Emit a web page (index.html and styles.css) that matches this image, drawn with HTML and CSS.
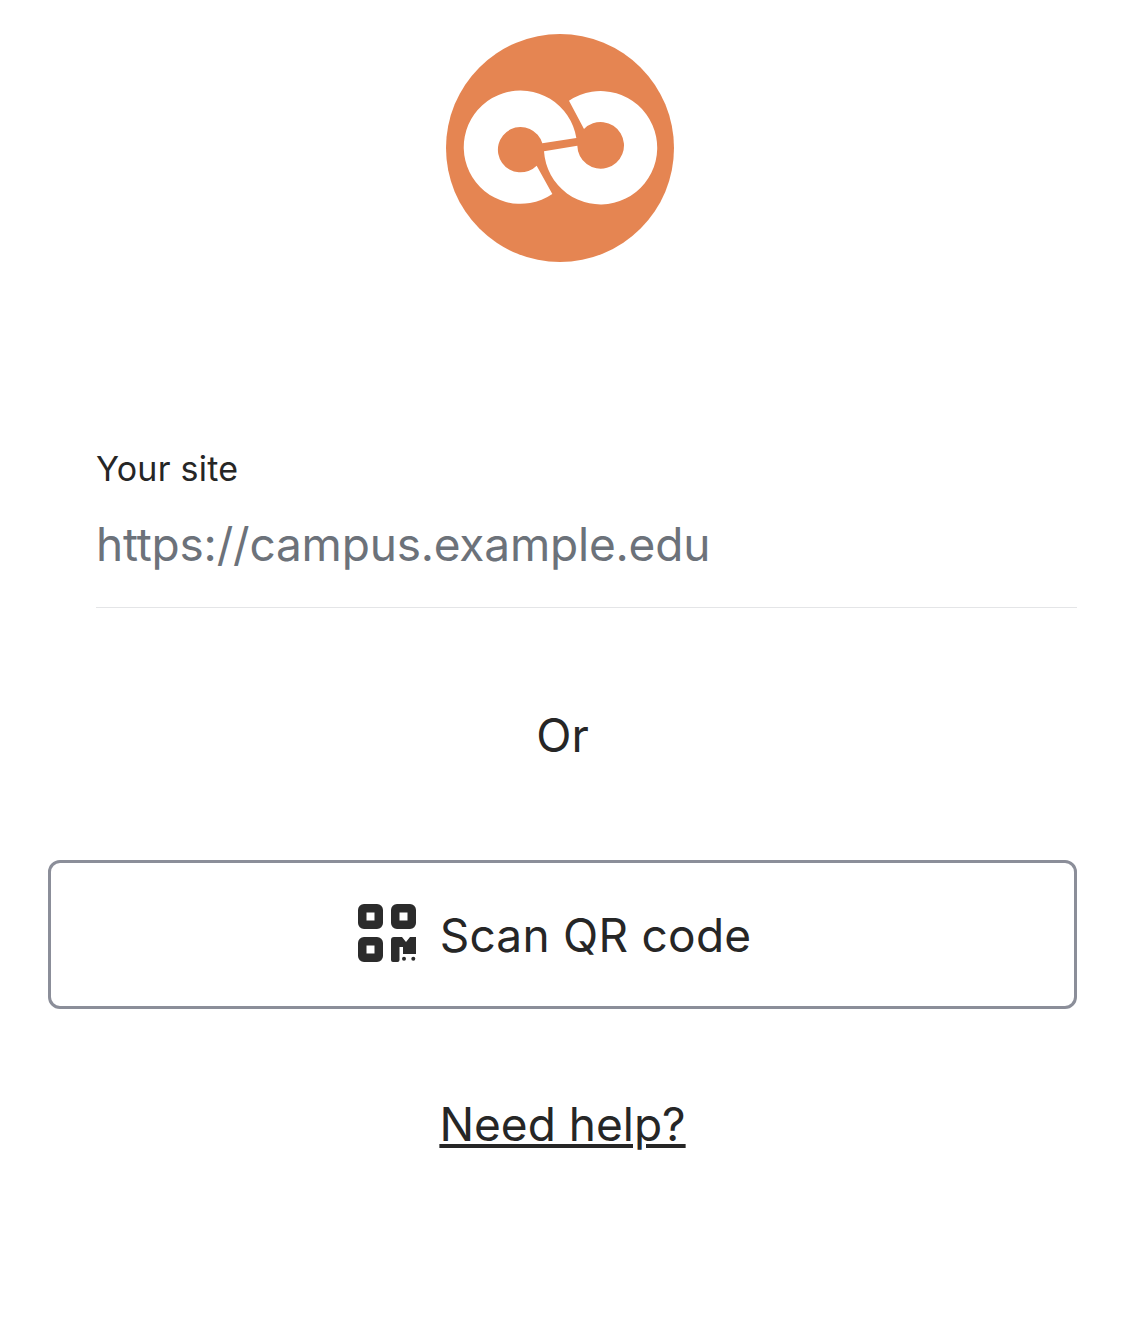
FILE: index.html
```html
<!DOCTYPE html>
<html lang="en">

<head>
    <meta charset="UTF-8">
    <meta name="viewport" content="width=device-width, initial-scale=1.0">
    <title>Connect to site</title>
    <link rel="stylesheet" href="styles.css">
</head>

<body>
    <main class="page">
        <div class="logo-wrap">
            <svg class="logo" viewBox="0 0 684 684" width="228" height="228">
                <circle cx="342" cy="342" r="342" fill="#e58552"></circle>
                <g transform="translate(-46 -40)" fill="#fff">
                    <path d="M365 520A170 170 0 1 1 437 352L335 368A68 68 0 1 0 318 435Z"></path>
                    <path d="M415 240A170 170 0 1 1 340 392L440 375A70 70 0 1 0 460 325Z"></path>
                </g>
            </svg>
        </div>

        <div class="site-field">
            <label class="site-label" for="site">Your site</label>
            <input class="site-input" id="site" type="text" placeholder="https://campus.example.edu">
        </div>

        <p class="or-text">Or</p>

        <button class="qr-button" type="button">
            <svg class="qr-icon" viewBox="0 0 58 58" width="58" height="58">
                <path fill-rule="evenodd" fill="#2b2b2b" d="M6 0H19A6 6 0 0 1 25 6V19A6 6 0 0 1 19 25H6A6 6 0 0 1 0 19V6A6 6 0 0 1 6 0ZM8.500 8.500V16.500H16.500V8.500Z"></path>
                <path fill-rule="evenodd" fill="#2b2b2b" d="M39 0H52A6 6 0 0 1 58 6V19A6 6 0 0 1 52 25H39A6 6 0 0 1 33 19V6A6 6 0 0 1 39 0ZM41.500 8.500V16.500H49.500V8.500Z"></path>
                <path fill-rule="evenodd" fill="#2b2b2b" d="M6 33H19A6 6 0 0 1 25 39V52A6 6 0 0 1 19 58H6A6 6 0 0 1 0 52V39A6 6 0 0 1 6 33ZM8.500 41.500V49.500H16.500V41.500Z"></path>
                <path fill="#2b2b2b" d="M36 33H44L48 38L52 33H58V50H45V43H41.500V56A2 2 0 0 1 39.500 58H35A2 2 0 0 1 33 56V36A3 3 0 0 1 36 33Z"></path>
                <circle cx="46" cy="54.800" r="2" fill="#2b2b2b"></circle>
                <circle cx="55.300" cy="54.800" r="2" fill="#2b2b2b"></circle>
            </svg>
            <span>Scan QR code</span>
        </button>

        <a class="help-link" href="#">Need help?</a>
    </main>
</body>

</html>
```

FILE: styles.css
```css
body {
    font-family: Inter, "Liberation Sans", sans-serif;
    margin: 0;
    background-color: #fff;
    color: #262626;
}

.page {
    display: flex;
    flex-direction: column;
    padding: 34px 48px 0;
}

.logo-wrap {
    display: flex;
    justify-content: center;
    padding-right: 5px;
}

.logo {
    display: block;
}

.site-field {
    display: flex;
    flex-direction: column;
    margin-top: 186px;
    margin-left: 48px;
    border-bottom: 1px solid #e4e5e7;
}

.site-label {
    font-size: 34px;
    line-height: 42px;
    letter-spacing: 0.25px;
}

.site-input {
    font-family: inherit;
    font-size: 46px;
    line-height: 56px;
    height: 56px;
    margin: 26px 0 35px;
    padding: 0;
    letter-spacing: -0.2px;
    border: 0;
    outline: 0;
}

.site-input::placeholder {
    color: #6c727a;
    opacity: 1;
}

.or-text {
    margin: 97px 0 0;
    font-size: 46px;
    line-height: 60px;
    text-align: center;
}

.qr-button {
    display: flex;
    align-items: center;
    justify-content: center;
    gap: 24px;
    height: 149px;
    margin-top: 95px;
    padding: 0 16px 0 0;
    font-family: inherit;
    font-size: 46px;
    letter-spacing: 0.25px;
    color: inherit;
    background-color: #fff;
    border: 3px solid #8b8e99;
    border-radius: 12px;
}

.qr-icon {
    display: block;
    margin-bottom: 4px;
}

.help-link {
    align-self: center;
    margin-top: 85px;
    font-size: 46px;
    line-height: 60px;
    color: inherit;
}
```
